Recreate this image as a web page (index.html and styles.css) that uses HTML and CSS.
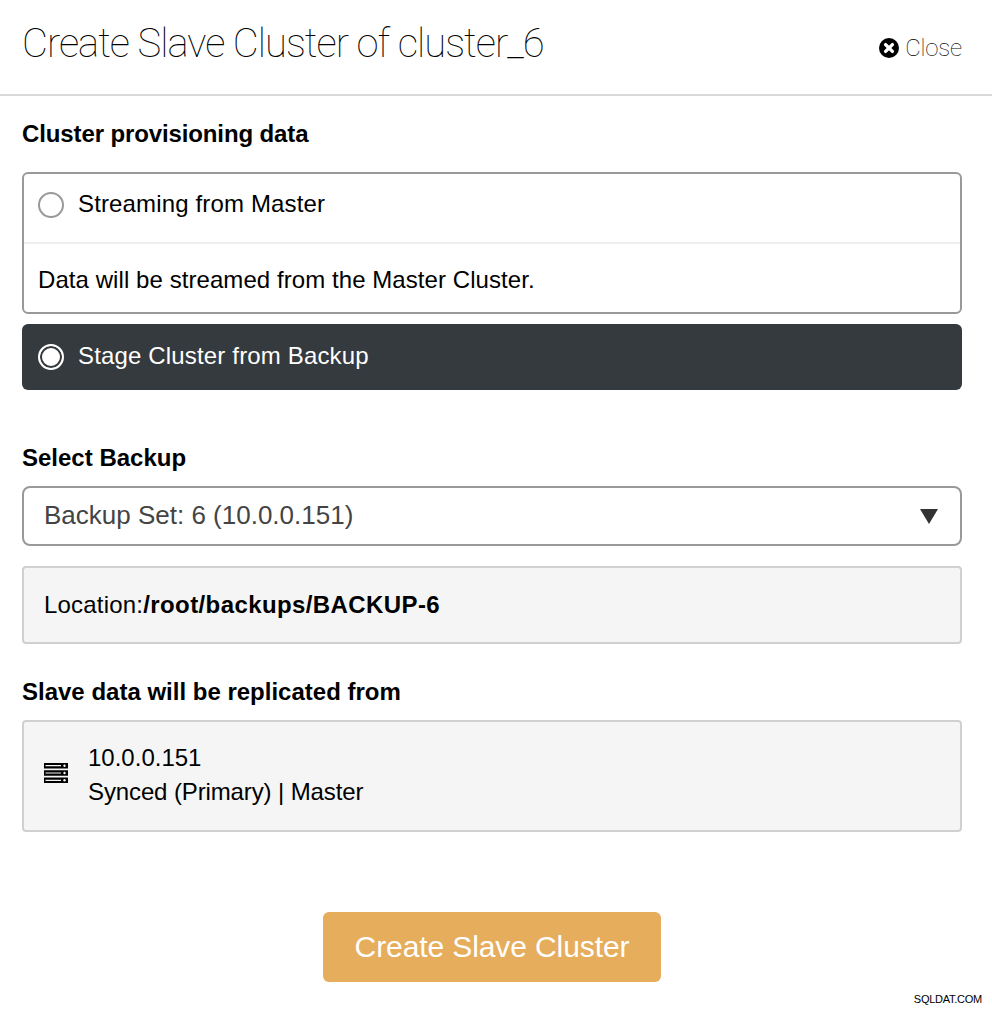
FILE: index.html
```html
<!DOCTYPE html>
<html lang="en">
<head>
    <meta charset="UTF-8">
    <title>Create Slave Cluster</title>
    <link rel="stylesheet" href="styles.css">
</head>
<body>

<div class="header">
    <div class="title">Create Slave Cluster of cluster_6</div>
    <a class="close" href="#">
        <svg class="close-icon" viewBox="0 0 20 20" width="20" height="20">
            <circle cx="10" cy="10" r="10" fill="#000"/>
            <path d="M6.6 6.6L13.4 13.4M13.4 6.6L6.6 13.4" stroke="#fff" stroke-width="3.4" stroke-linecap="round"/>
        </svg>
        Close
    </a>
</div>

<div class="content">
    <div class="label label-first">Cluster provisioning data</div>

    <div class="option">
        <div class="option-head">
            <span class="radio"></span>
            Streaming from Master
        </div>
        <div class="option-body">Data will be streamed from the Master Cluster.</div>
    </div>

    <div class="option-active">
        <span class="radio radio-on"></span>
        Stage Cluster from Backup
    </div>

    <div class="label label-backup">Select Backup</div>

    <div class="select">
        Backup Set: 6 (10.0.0.151)
        <span class="arrow"></span>
    </div>

    <div class="well well-location">Location:<b>/root/backups/BACKUP-6</b></div>

    <div class="label label-slave">Slave data will be replicated from</div>

    <div class="well well-host">
        <svg class="server-icon" viewBox="0 0 24 20" width="24" height="20">
            <path d="M0 0H24V5.4H0ZM0 7.3H24V12.7H0ZM0 14.6H24V20H0Z" fill="#000"/>
            <path d="M1.5 2.7H17M1.5 10H17M1.5 17.3H17" stroke="#f5f5f5" stroke-width="1.2"/>
            <circle cx="20.5" cy="2.7" r="1.2" fill="#f5f5f5"/>
            <circle cx="20.5" cy="10" r="1.2" fill="#f5f5f5"/>
            <circle cx="20.5" cy="17.3" r="1.2" fill="#f5f5f5"/>
        </svg>
        <div class="host-text">
            <div>10.0.0.151</div>
            <div class="host-status">Synced (Primary) | Master</div>
        </div>
    </div>

    <div class="actions">
        <button class="create-btn" type="button">Create Slave Cluster</button>
    </div>
</div>

<div class="watermark">SQLDAT.COM</div>

</body>
</html>
```

FILE: styles.css
```css
* {
    margin: 0;
    padding: 0;
    box-sizing: border-box;
}
body {
    font-family: "Liberation Sans", Arial, sans-serif;
    font-size: 24px;
    line-height: 34px;
    color: #000;
    background-color: white;
    height: 1010px;
    overflow: hidden;
    position: relative;
}
.header {
    height: 96px;
    border-bottom: 2px solid #d9d9d9;
    padding: 0 30px 0 22px;
    display: flex;
    justify-content: space-between;
}
.title {
    font-family: Roboto, sans-serif;
    font-weight: 100;
    font-size: 40px;
    line-height: 46px;
    letter-spacing: -1px;
    padding-top: 21px;
}
.close {
    display: flex;
    align-items: center;
    gap: 6px;
    height: 34px;
    margin-top: 31px;
    font-family: Roboto, sans-serif;
    font-weight: 100;
    font-size: 24px;
    letter-spacing: -0.2px;
    color: #000;
    text-decoration: none;
}
.content {
    padding: 0 30px 0 22px;
}
.label {
    font-weight: bold;
}
.label-first {
    margin-top: 21px;
    margin-bottom: 21px;
    letter-spacing: -0.12px;
}
.option {
    border: 2px solid #999;
    border-radius: 6px;
    height: 142px;
}
.option-head {
    height: 70px;
    border-bottom: 2px solid #eee;
    padding: 13px 14px 0;
    display: flex;
    gap: 14px;
    letter-spacing: 0.15px;
}
.option-body {
    padding: 19px 14px 0;
    letter-spacing: 0.07px;
}
.radio {
    width: 26px;
    height: 26px;
    margin-top: 5px;
    border: 2px solid #999;
    border-radius: 50%;
    background-color: white;
}
.option-active {
    margin-top: 10px;
    height: 66px;
    background-color: #343a3e;
    color: white;
    border-radius: 6px;
    padding: 15px 16px 0;
    display: flex;
    gap: 14px;
    letter-spacing: 0.16px;
}
.radio-on {
    border-color: white;
    background-color: white;
    box-shadow: inset 0 0 0 2px #343a3e;
}
.label-backup {
    margin-top: 51px;
    margin-bottom: 11px;
}
.select {
    height: 60px;
    border: 2px solid #999;
    border-radius: 8px;
    padding: 10px 20px 0;
    font-size: 26px;
    color: #444;
    position: relative;
}
.arrow {
    position: absolute;
    right: 22px;
    top: 21px;
    border-left: 9px solid transparent;
    border-right: 9px solid transparent;
    border-top: 15px solid #333;
}
.well {
    background-color: #f5f5f5;
    border: 2px solid #d0d0d0;
    border-radius: 4px;
}
.well-location {
    margin-top: 20px;
    height: 78px;
    padding: 20px 20px 0;
    letter-spacing: 0.2px;
}
.well-location b {
    letter-spacing: 0.4px;
}
.label-slave {
    margin-top: 31px;
    margin-bottom: 11px;
}
.well-host {
    height: 112px;
    padding: 19px 20px 0;
    display: flex;
    gap: 20px;
}
.server-icon {
    margin-top: 22px;
}
.host-status {
    letter-spacing: -0.12px;
}
.actions {
    display: flex;
    justify-content: center;
    margin-top: 80px;
}
.create-btn {
    width: 338px;
    height: 70px;
    background-color: #e6ad5c;
    color: white;
    border: none;
    border-radius: 6px;
    font-family: "Liberation Sans", Arial, sans-serif;
    font-size: 30px;
    letter-spacing: -0.1px;
}
.watermark {
    position: absolute;
    right: 10px;
    top: 991px;
    font-size: 11px;
    line-height: 16px;
    letter-spacing: -0.25px;
    color: #000;
}
```
